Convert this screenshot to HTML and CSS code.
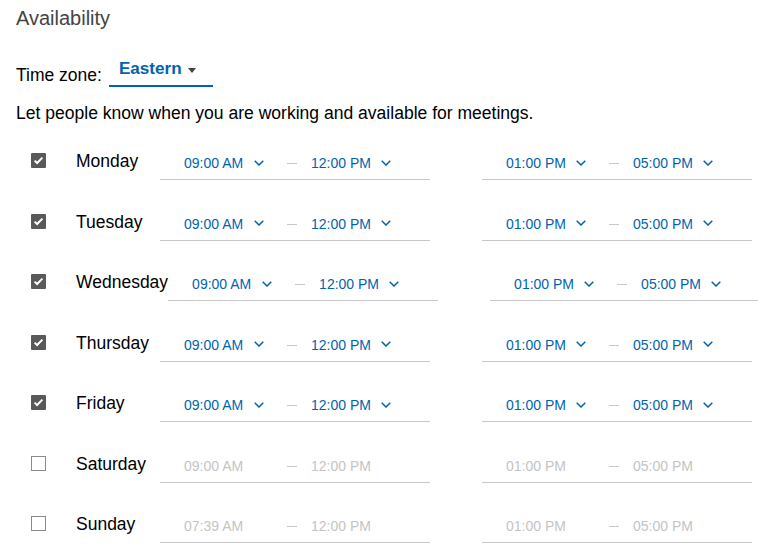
FILE: index.html
```html
<!DOCTYPE html>
<html lang="en">
<head>
<meta charset="utf-8">
<title>Availability</title>
<link rel="stylesheet" href="styles.css">
</head>
<body>
<div class="page">
  <h1 class="title">Availability</h1>
  <div class="tz-row">
    <span class="tz-label">Time zone:</span>
    <span class="tz-select"><span class="tz-value">Eastern</span><span class="caret"></span></span>
  </div>
  <p class="desc">Let people know when you are working and available for meetings.</p>

  <div class="days">
    <div class="day">
      <span class="check on"><svg viewBox="0 0 15 15" width="15" height="15"><path d="M3.6 7.6 L6.1 10 L11.4 4.6" fill="none" stroke="#fff" stroke-width="2"/></svg></span>
      <span class="day-name">Monday</span>
      <div class="range">
        <span class="sel"><span>09:00 AM</span><svg class="chev" viewBox="0 0 10 6" width="10" height="6"><path d="M0.7 0.7 L5 5 L9.3 0.7" fill="none" stroke="currentColor" stroke-width="1.5"/></svg></span>
        <span class="dash"></span>
        <span class="sel"><span>12:00 PM</span><svg class="chev" viewBox="0 0 10 6" width="10" height="6"><path d="M0.7 0.7 L5 5 L9.3 0.7" fill="none" stroke="currentColor" stroke-width="1.5"/></svg></span>
      </div>
      <div class="range">
        <span class="sel"><span>01:00 PM</span><svg class="chev" viewBox="0 0 10 6" width="10" height="6"><path d="M0.7 0.7 L5 5 L9.3 0.7" fill="none" stroke="currentColor" stroke-width="1.5"/></svg></span>
        <span class="dash"></span>
        <span class="sel"><span>05:00 PM</span><svg class="chev" viewBox="0 0 10 6" width="10" height="6"><path d="M0.7 0.7 L5 5 L9.3 0.7" fill="none" stroke="currentColor" stroke-width="1.5"/></svg></span>
      </div>
    </div>

    <div class="day">
      <span class="check on"><svg viewBox="0 0 15 15" width="15" height="15"><path d="M3.6 7.6 L6.1 10 L11.4 4.6" fill="none" stroke="#fff" stroke-width="2"/></svg></span>
      <span class="day-name">Tuesday</span>
      <div class="range">
        <span class="sel"><span>09:00 AM</span><svg class="chev" viewBox="0 0 10 6" width="10" height="6"><path d="M0.7 0.7 L5 5 L9.3 0.7" fill="none" stroke="currentColor" stroke-width="1.5"/></svg></span>
        <span class="dash"></span>
        <span class="sel"><span>12:00 PM</span><svg class="chev" viewBox="0 0 10 6" width="10" height="6"><path d="M0.7 0.7 L5 5 L9.3 0.7" fill="none" stroke="currentColor" stroke-width="1.5"/></svg></span>
      </div>
      <div class="range">
        <span class="sel"><span>01:00 PM</span><svg class="chev" viewBox="0 0 10 6" width="10" height="6"><path d="M0.7 0.7 L5 5 L9.3 0.7" fill="none" stroke="currentColor" stroke-width="1.5"/></svg></span>
        <span class="dash"></span>
        <span class="sel"><span>05:00 PM</span><svg class="chev" viewBox="0 0 10 6" width="10" height="6"><path d="M0.7 0.7 L5 5 L9.3 0.7" fill="none" stroke="currentColor" stroke-width="1.5"/></svg></span>
      </div>
    </div>

    <div class="day">
      <span class="check on"><svg viewBox="0 0 15 15" width="15" height="15"><path d="M3.6 7.6 L6.1 10 L11.4 4.6" fill="none" stroke="#fff" stroke-width="2"/></svg></span>
      <span class="day-name">Wednesday</span>
      <div class="range">
        <span class="sel"><span>09:00 AM</span><svg class="chev" viewBox="0 0 10 6" width="10" height="6"><path d="M0.7 0.7 L5 5 L9.3 0.7" fill="none" stroke="currentColor" stroke-width="1.5"/></svg></span>
        <span class="dash"></span>
        <span class="sel"><span>12:00 PM</span><svg class="chev" viewBox="0 0 10 6" width="10" height="6"><path d="M0.7 0.7 L5 5 L9.3 0.7" fill="none" stroke="currentColor" stroke-width="1.5"/></svg></span>
      </div>
      <div class="range">
        <span class="sel"><span>01:00 PM</span><svg class="chev" viewBox="0 0 10 6" width="10" height="6"><path d="M0.7 0.7 L5 5 L9.3 0.7" fill="none" stroke="currentColor" stroke-width="1.5"/></svg></span>
        <span class="dash"></span>
        <span class="sel"><span>05:00 PM</span><svg class="chev" viewBox="0 0 10 6" width="10" height="6"><path d="M0.7 0.7 L5 5 L9.3 0.7" fill="none" stroke="currentColor" stroke-width="1.5"/></svg></span>
      </div>
    </div>

    <div class="day">
      <span class="check on"><svg viewBox="0 0 15 15" width="15" height="15"><path d="M3.6 7.6 L6.1 10 L11.4 4.6" fill="none" stroke="#fff" stroke-width="2"/></svg></span>
      <span class="day-name">Thursday</span>
      <div class="range">
        <span class="sel"><span>09:00 AM</span><svg class="chev" viewBox="0 0 10 6" width="10" height="6"><path d="M0.7 0.7 L5 5 L9.3 0.7" fill="none" stroke="currentColor" stroke-width="1.5"/></svg></span>
        <span class="dash"></span>
        <span class="sel"><span>12:00 PM</span><svg class="chev" viewBox="0 0 10 6" width="10" height="6"><path d="M0.7 0.7 L5 5 L9.3 0.7" fill="none" stroke="currentColor" stroke-width="1.5"/></svg></span>
      </div>
      <div class="range">
        <span class="sel"><span>01:00 PM</span><svg class="chev" viewBox="0 0 10 6" width="10" height="6"><path d="M0.7 0.7 L5 5 L9.3 0.7" fill="none" stroke="currentColor" stroke-width="1.5"/></svg></span>
        <span class="dash"></span>
        <span class="sel"><span>05:00 PM</span><svg class="chev" viewBox="0 0 10 6" width="10" height="6"><path d="M0.7 0.7 L5 5 L9.3 0.7" fill="none" stroke="currentColor" stroke-width="1.5"/></svg></span>
      </div>
    </div>

    <div class="day">
      <span class="check on"><svg viewBox="0 0 15 15" width="15" height="15"><path d="M3.6 7.6 L6.1 10 L11.4 4.6" fill="none" stroke="#fff" stroke-width="2"/></svg></span>
      <span class="day-name">Friday</span>
      <div class="range">
        <span class="sel"><span>09:00 AM</span><svg class="chev" viewBox="0 0 10 6" width="10" height="6"><path d="M0.7 0.7 L5 5 L9.3 0.7" fill="none" stroke="currentColor" stroke-width="1.5"/></svg></span>
        <span class="dash"></span>
        <span class="sel"><span>12:00 PM</span><svg class="chev" viewBox="0 0 10 6" width="10" height="6"><path d="M0.7 0.7 L5 5 L9.3 0.7" fill="none" stroke="currentColor" stroke-width="1.5"/></svg></span>
      </div>
      <div class="range">
        <span class="sel"><span>01:00 PM</span><svg class="chev" viewBox="0 0 10 6" width="10" height="6"><path d="M0.7 0.7 L5 5 L9.3 0.7" fill="none" stroke="currentColor" stroke-width="1.5"/></svg></span>
        <span class="dash"></span>
        <span class="sel"><span>05:00 PM</span><svg class="chev" viewBox="0 0 10 6" width="10" height="6"><path d="M0.7 0.7 L5 5 L9.3 0.7" fill="none" stroke="currentColor" stroke-width="1.5"/></svg></span>
      </div>
    </div>

    <div class="day off">
      <span class="check"></span>
      <span class="day-name">Saturday</span>
      <div class="range">
        <span class="sel"><span>09:00 AM</span></span>
        <span class="dash"></span>
        <span class="sel"><span>12:00 PM</span></span>
      </div>
      <div class="range">
        <span class="sel"><span>01:00 PM</span></span>
        <span class="dash"></span>
        <span class="sel"><span>05:00 PM</span></span>
      </div>
    </div>

    <div class="day off">
      <span class="check"></span>
      <span class="day-name">Sunday</span>
      <div class="range">
        <span class="sel"><span>07:39 AM</span></span>
        <span class="dash"></span>
        <span class="sel"><span>12:00 PM</span></span>
      </div>
      <div class="range">
        <span class="sel"><span>01:00 PM</span></span>
        <span class="dash"></span>
        <span class="sel"><span>05:00 PM</span></span>
      </div>
    </div>
  </div>
</div>
</body>
</html>
```

FILE: styles.css
```css
html, body {
  margin: 0;
  padding: 0;
  overflow: hidden;
  background: #fff;
}

body {
  font-family: "Liberation Sans", Arial, sans-serif;
  color: #000;
}

.page {
  padding: 0 0 0 16px;
}

.title {
  margin: 6px 0 0;
  font-size: 20px;
  line-height: 24px;
  font-weight: normal;
  color: #444;
}

.tz-row {
  display: flex;
  align-items: flex-start;
  margin-top: 29px;
}

.tz-label {
  font-size: 17.5px;
  line-height: 20px;
  margin-top: 6px;
}

.tz-select {
  display: flex;
  align-items: center;
  margin-left: 7px;
  padding: 0 17px 6px 10px;
  border-bottom: 2px solid #0063b1;
}

.tz-value {
  font-size: 17.1px;
  line-height: 20px;
  font-weight: bold;
  color: #0063b1;
}

.caret {
  width: 0;
  height: 0;
  margin-left: 6px;
  margin-top: 2px;
  border-left: 4px solid transparent;
  border-right: 4px solid transparent;
  border-top: 5px solid #444;
}

.desc {
  margin: 16px 0 0;
  font-size: 17.55px;
  line-height: 20px;
}

.days {
  margin-top: 17px;
}

.day {
  display: flex;
  align-items: flex-start;
  height: 60.5px;
}

.check {
  box-sizing: border-box;
  width: 15px;
  height: 15px;
  margin: 13px 30px 0 15px;
  flex: none;
  border: 1px solid #8a8a8a;
  background: #fff;
}

.check.on {
  border: none;
  background: #595959;
  border-radius: 1px;
}

.check svg {
  display: block;
}

.day-name {
  flex: none;
  min-width: 84px;
  margin-top: 11px;
  font-size: 17.5px;
  line-height: 20px;
  white-space: nowrap;
}

.range {
  display: flex;
  align-items: center;
  flex: none;
  box-sizing: border-box;
  width: 270px;
  margin-right: 52px;
  padding: 13px 0 6px 24px;
  border-bottom: 1px solid #c8c8c8;
  font-size: 14px;
  line-height: 20px;
  color: #0063b1;
}

.sel {
  display: flex;
  align-items: center;
  justify-content: space-between;
  width: 80px;
  white-space: nowrap;
}

.chev {
  display: block;
  margin-top: -1px;
}

.dash {
  width: 10px;
  height: 0;
  margin: 1px 14px 0 23px;
  border-top: 1px solid #c8c8c8;
}

.day.off .range {
  color: #c4c4c4;
}
```
